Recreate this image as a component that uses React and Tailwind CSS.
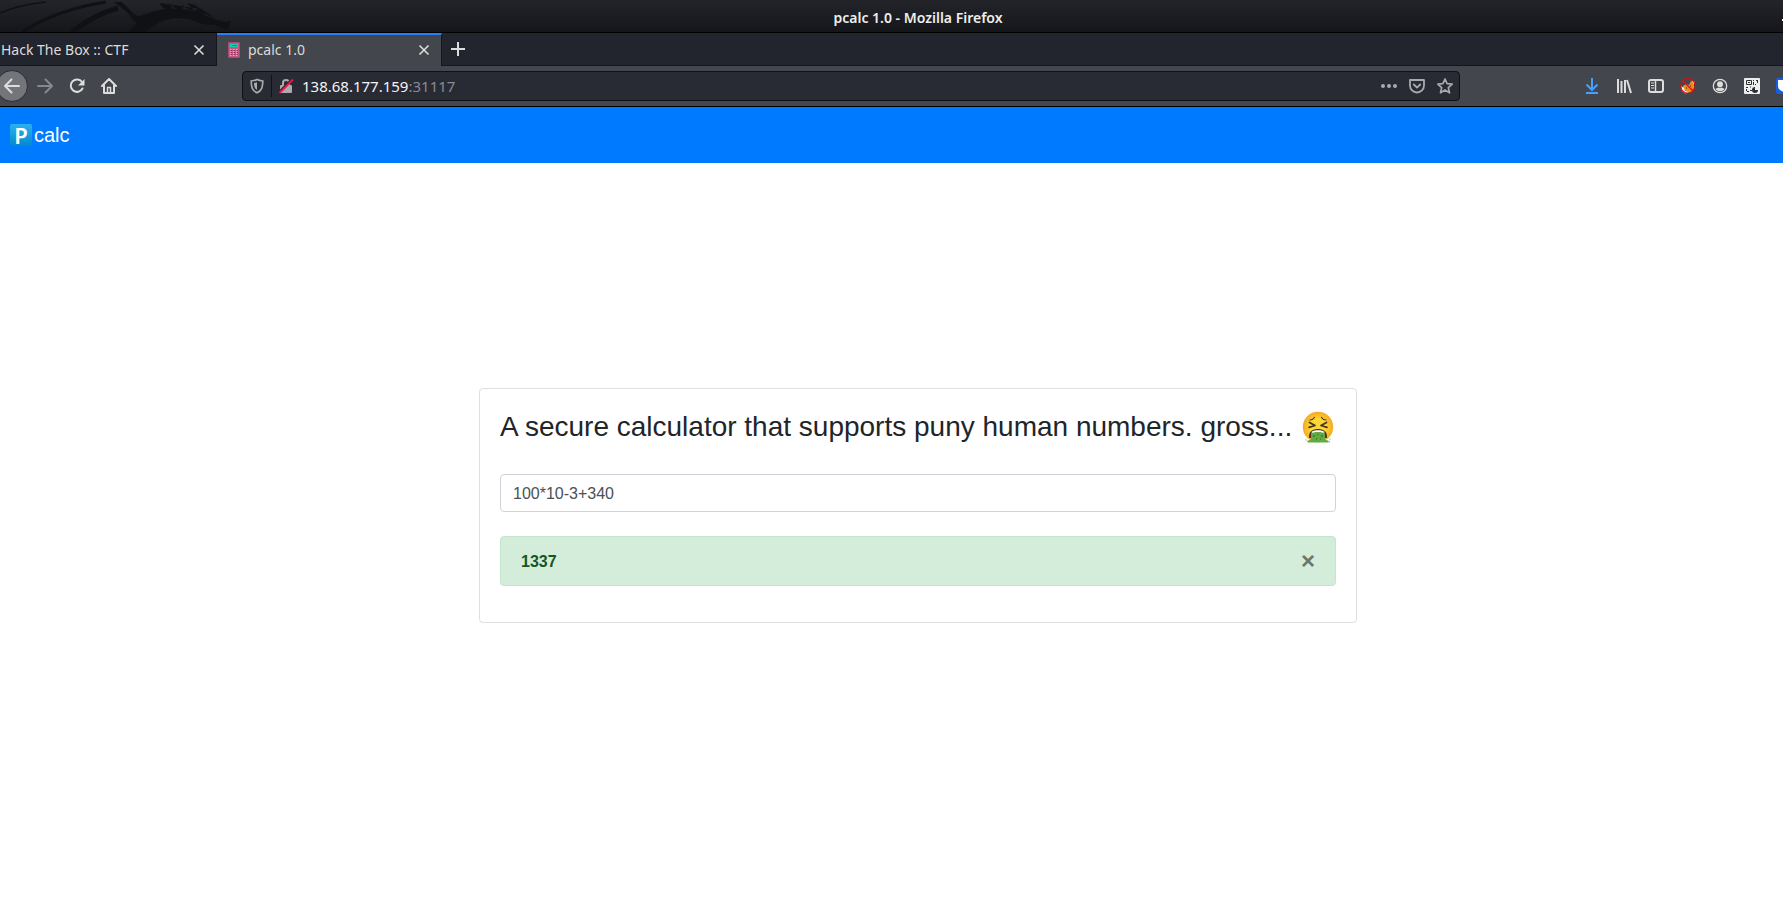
const Icon = ({ className = "", children, ...rest }) => (
  <svg viewBox="0 0 16 16" className={`size-4 shrink-0 ${className}`} fill="none" stroke="currentColor" aria-hidden="true" {...rest}>
    {children}
  </svg>
);

function Dragon() {
  return (
    <svg className="absolute top-0 left-0 h-8 w-60" viewBox="0 0 240 32" fill="none" stroke="#101115" aria-hidden="true">
      <path d="M0 13C14 7 28 4 46 2" strokeWidth="1.5" />
      <path d="M22 32C42 19 68 8 106 2" strokeWidth="3" />
      <path d="M72 32C86 21 100 13 118 8" strokeWidth="5" />
      <path d="M114 2h8l12 12c3 3 7 2 12 0 10-4 20-6 36-5l12 2 6-3 9 6 5 5 11 3 6-1-4 9-12-5c-8 0-16-1-20-4-16-5-30-3-40 4-5 3-8 5-10 7h-17l9-9c-4-3-7-7-10-11z" fill="#101115" stroke="none" />
      <path d="M160 3c1 4 5 7 12 7l-1-6c3 4 6 6 12 6l-1-6c3 4 6 6 12 6l-7-7c7 1 10 3 13 6" fill="#101115" stroke="none" />
      <path d="M204 14l8 4" stroke="#1d1f24" strokeWidth="1" />
    </svg>
  );
}

function CalculatorIcon() {
  return (
    <Icon stroke="none">
      <rect x="2" y="0" width="12" height="16" rx="1" fill="#a84a72" />
      <rect x="3" y="1" width="10" height="14" fill="#c25a86" />
      <rect x="4" y="2" width="8" height="3" fill="#12cdb0" />
      <rect x="6" y="3" width="5" height="1" fill="#0c8f80" />
      {[7, 9, 11, 13].map((y) =>
        [4, 7, 10].map((x) => <rect key={`${x}-${y}`} x={x} y={y} width="1.5" height="1" fill="#dfc04e" />)
      )}
      {[8, 10, 12].map((y) =>
        [5, 8, 11].map((x) => <rect key={`${x}-${y}`} x={x} y={y} width="1" height="1" fill="#7c2f50" />)
      )}
    </Icon>
  );
}

function Close() {
  return (
    <Icon className="text-[#dcdcda]" strokeWidth="1.6">
      <path d="M3.5 3.5l9 9M12.5 3.5l-9 9" />
    </Icon>
  );
}

function SickFace() {
  return (
    <svg viewBox="0 0 32 32" className="size-8 shrink-0" role="img" aria-label="vomiting face">
      <defs>
        <radialGradient id="skin">
          <stop offset="0.5" stopColor="#fdd835" />
          <stop offset="1" stopColor="#f4a825" />
        </radialGradient>
      </defs>
      <circle cx="16" cy="16" r="15.2" fill="url(#skin)" />
      <g fill="none" stroke="#4a3620" strokeWidth="1.2" strokeLinecap="round" strokeLinejoin="round">
        <path d="M8 9c2 0 3.500-1 4.500-2.500M24 9c-2 0-3.500-1-4.500-2.500" />
        <path strokeWidth="1.8" d="M7.500 11.500l5.500 3-6 1.800M24.500 11.500l-5.500 3 6 1.800" />
      </g>
      <path d="M7 25c0-4.500 4-7 9-7s9 2.500 9 7v2H7z" fill="#4a3620" />
      <path d="M9.500 21c1.500-2.500 11.500-2.500 13 0l-1 2h-11z" fill="#fff" />
      <path d="M9 22.500c2-2 12-2 14 0v6l4 1.500-1 1.500H6L5 30l4-1.500z" fill="#65a944" />
      <path d="M12 24v2M20 24v2M16 23v1M14 28h1M18 28h1" stroke="#33802f" strokeWidth="1.500" />
      <path d="M3.500 29h1M27.500 28h1M27 31h1" stroke="#65a944" strokeWidth="1.200" />
    </svg>
  );
}

function TitleBar() {
  return (
    <header className="relative flex h-[33px] items-center justify-center overflow-hidden border-b border-black bg-linear-to-b from-[#22242a] from-5% to-[#15161a] pt-1 pl-[53px]">
      <Dragon />
      <h1 className="text-sm font-semibold text-[#eeeeec]">pcalc 1.0 - Mozilla Firefox</h1>
      <span className="absolute top-[19px] right-0 h-[2px] w-px bg-white" />
    </header>
  );
}

function TabStrip() {
  return (
    <div className="flex h-[33px] bg-[#23252e] text-sm text-[#dcdcda]">
      <div className="flex w-[217px] items-center justify-between border-r border-b border-[#15161b] pt-[2px] pr-[9px] pl-px">
        <a href="#htb">Hack The Box :: CTF</a>
        <button type="button" aria-label="Close Hack The Box tab"><Close /></button>
      </div>
      <div className="flex w-[225px] items-center gap-[6px] border-t-2 border-r border-[#15161b] border-t-[#2b7df5] bg-[#43464d] pr-[9px] pb-px pl-[9px]">
        <CalculatorIcon />
        <a href="#pcalc" className="flex-1">pcalc 1.0</a>
        <button type="button" aria-label="Close pcalc tab"><Close /></button>
      </div>
      <div className="flex flex-1 items-center border-b border-[#15161b] pl-2">
        <button type="button" aria-label="New tab">
          <Icon strokeWidth="2"><path d="M8 1v14M1 8h14" /></Icon>
        </button>
      </div>
    </div>
  );
}

function AddressBar() {
  return (
    <div className="ml-[125px] flex h-[30px] w-[1218px] items-center rounded border border-[#101116] bg-[#282a34] pr-[6px] pl-[6px] text-[#a9aaae]">
      <button type="button" aria-label="Tracking protection">
        <Icon strokeWidth="1.7">
          <path d="M8 1.5c2 1 4 1.300 5.800 1.500 0 6-1 9.500-5.800 11.800C3.200 12.500 2.200 9 2.200 3 4 2.800 6 2.500 8 1.500z" />
          <path d="M8 4.300L5 5.100c0 3.500.5 5.500 3 7z" fill="currentColor" stroke="none" />
        </Icon>
      </button>
      <span className="mx-[6px] h-[22px] w-px bg-[#101116]" />
      <button type="button" aria-label="Connection is not secure">
        <Icon strokeWidth="2">
          <path d="M5 8V5a3 3 0 0 1 6 0v3" />
          <rect x="2" y="7" width="12" height="8" rx="1" fill="currentColor" stroke="none" />
          <path d="M1 14L14 1" stroke="#282a34" strokeWidth="2" />
          <path d="M1.500 15L15 1.500" stroke="#f0134d" strokeWidth="2" />
        </Icon>
      </button>
      <p className="flex-1 pl-2 text-[15px] text-[#8a8b92]">
        <span className="text-[#f4f4f4]">138.68.177.159</span>:31117
      </p>
      <div className="flex gap-3">
        <button type="button" aria-label="Page actions">
          <Icon stroke="none" fill="currentColor"><circle cx="2" cy="8" r="2" /><circle cx="8" cy="8" r="2" /><circle cx="14" cy="8" r="2" /></Icon>
        </button>
        <button type="button" aria-label="Save to Pocket">
          <Icon strokeWidth="1.8" strokeLinejoin="round" strokeLinecap="round"><path d="M1 2h14v5.500a7 7 0 0 1-14 0zM4.800 6.500L8 9.600l3.200-3.100" /></Icon>
        </button>
        <button type="button" aria-label="Bookmark">
          <Icon strokeWidth="1.7" strokeLinejoin="round"><path d="M8 1l2.100 4.700 5.100.5-3.900 3.400 1.200 5.200L8 12.100l-4.500 2.700 1.200-5.200L.8 6.200l5.100-.5z" /></Icon>
        </button>
      </div>
    </div>
  );
}

function Toolbar() {
  return (
    <nav aria-label="Browser" className="flex h-[41px] items-center overflow-hidden border-b border-black bg-[#43464d] text-[#dcdcda]">
      <button type="button" aria-label="Back" className="-ml-1 flex size-8 shrink-0 items-center justify-center rounded-full border border-[#2b2d33] bg-[#73757a]">
        <Icon strokeWidth="2" strokeLinecap="round" strokeLinejoin="round"><path d="M15 8H1M7.500 1.500L1 8l6.500 6.500" /></Icon>
      </button>
      <button type="button" aria-label="Forward" className="ml-[9px] text-[#87888d]">
        <Icon strokeWidth="2" strokeLinecap="round" strokeLinejoin="round"><path d="M1 8h14M8.500 1.500L15 8l-6.500 6.500" /></Icon>
      </button>
      <button type="button" aria-label="Reload" className="ml-4">
        <Icon strokeWidth="2" strokeLinecap="round"><path d="M13.500 10.500A6.200 6.200 0 1 1 13 4" /><path d="M15.500 1v6.500H9z" fill="currentColor" stroke="none" /></Icon>
      </button>
      <button type="button" aria-label="Home" className="ml-4">
        <Icon strokeWidth="2" strokeLinecap="round" strokeLinejoin="round"><path d="M1 8l7-7 7 7M3 7.500V15h10V7.500" /><path d="M6.500 15V9.500h3V15" strokeWidth="1.5" /></Icon>
      </button>
      <AddressBar />
      <div className="ml-auto flex shrink-0 gap-4">
        <button type="button" aria-label="Downloads" className="text-[#45a1ff]">
          <Icon strokeWidth="2"><path d="M8 0v12M2.500 6.500L8 12l5.500-5.500M2 15h12" /></Icon>
        </button>
        <button type="button" aria-label="Library">
          <Icon strokeWidth="2"><path d="M2 1v14M5.500 3v12M9 2v13M11 2l4 13" /></Icon>
        </button>
        <button type="button" aria-label="Sidebars">
          <Icon strokeWidth="2"><rect x="1" y="2" width="14" height="12" rx="2" /><path d="M7.500 2v12" strokeWidth="1.5" /><path d="M3 5h3M3 7.500h3M3 10h3" strokeWidth="1" /></Icon>
        </button>
        <button type="button" aria-label="Proxy off">
          <Icon>
            <path d="M3 8l3-2 3 1 2-4 3 2v5l-3 4-5 1-3-3z" fill="#ef8a1c" stroke="none" />
            <path d="M1 8l3 2 1 3 4 1-4 1.500L2 13zM11.500 2l3.500 2-1.500 2z" fill="#eee" stroke="none" />
            <path d="M6 10h1M10 8h1" stroke="#3a2a20" />
            <circle cx="8" cy="8" r="7.300" stroke="#d41111" strokeWidth="1.2" />
            <path d="M3 3l10 10" stroke="#d41111" strokeWidth="1.2" />
          </Icon>
        </button>
        <button type="button" aria-label="Account">
          <Icon><circle cx="8" cy="8" r="6.700" strokeWidth="1.3" /><circle cx="8" cy="6.300" r="3" fill="currentColor" stroke="none" /><path d="M3.500 11c1-1 2-1.300 3-1.300h3c1 0 2 .3 3 1.300-2 3-7 3-9 0z" fill="currentColor" stroke="none" /></Icon>
        </button>
        <button type="button" aria-label="QR code">
          <Icon stroke="#2b2d33"><rect width="16" height="16" rx="1" fill="#eee" stroke="none" /><path d="M2.500 2.500h5v4h-5zM4 4.500h2M9 2.500h1M9.500 4v3M12 2.500h2M13.500 3v2M11 6.500h1M2 9.500h2M6 9h1M3 13.500h2M2.500 11v2M6 12.500h2" /><path d="M11 9a3 3 0 1 0 3 3h-3z" fill="#2b2d33" stroke="none" /></Icon>
        </button>
        <button type="button" aria-label="Password manager" className="w-[7px] overflow-hidden">
          <Icon stroke="none"><rect width="16" height="16" rx="2" fill="#175ddc" /><path d="M2 2h12v6c0 3-3 5-6 6-3-1-6-3-6-6z" fill="#fff" /></Icon>
        </button>
      </div>
    </nav>
  );
}

export default function App() {
  return (
    <div className="flex min-h-screen flex-col overflow-hidden bg-white font-['Liberation_Sans',sans-serif] text-[#212529]">
      <div className="font-['Noto_Sans',sans-serif]">
        <TitleBar />
        <TabStrip />
        <Toolbar />
      </div>
      <nav aria-label="Site" className="flex h-14 items-center bg-[#007bff] pl-[10px]">
        <a href="#home" className="flex items-center gap-[2px] text-xl text-white">
          <span className="flex size-[22px] items-center justify-center rounded-xs bg-linear-to-b from-[#29b2ee] to-[#0288d1] font-['Noto_Sans',sans-serif] text-[22px] leading-[22px] font-semibold">P</span>
          calc
        </a>
      </nav>
      <main className="flex flex-1 items-center justify-center pb-[66px] pl-[53px]">
        <section className="w-[878px] rounded border border-[#dfdfdf] px-5 pt-5 pb-9">
          <h2 className="flex h-[34px] items-center gap-[10px] pt-[2px] text-[28px] font-normal whitespace-nowrap">
            A secure calculator that supports puny human numbers. gross... <SickFace />
          </h2>
          <input aria-label="Formula" defaultValue="100*10-3+340" className="mt-[31px] h-[38px] w-full rounded border border-[#ced4da] px-3 pt-[2px] text-base text-[#495057]" />
          <div role="alert" className="mt-6 flex h-[50px] items-center justify-between rounded border border-[#c3e6cb] bg-[#d4edda] px-5 text-[#155724]">
            <strong className="pt-[2px]">1337</strong>
            <button type="button" aria-label="Close" className="text-2xl font-bold text-[#6a776d]">×</button>
          </div>
        </section>
      </main>
    </div>
  );
}
